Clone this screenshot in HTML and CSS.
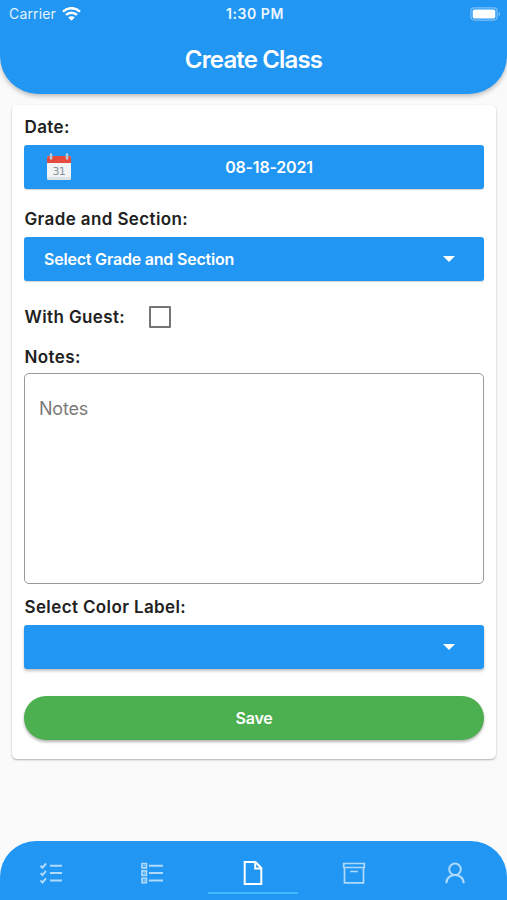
FILE: index.html
```html
<!DOCTYPE html>
<html lang="en">
<head>
<meta charset="utf-8">
<title>Create Class</title>
<link rel="stylesheet" href="styles.css">
</head>
<body>
<div class="screen">
  <header class="header">
    <div class="status">
      <div class="carrier"><span>Carrier</span>
        <svg width="19" height="14" viewBox="0 0 19 14" fill="none" stroke="#fff" stroke-width="2.5"><path d="M1 4.7C5.8 0 13.2 0 18 4.7M4 7.9c3.2-3 7.8-3 11 0"/><path d="M6.2 10.4c1.8-1.7 4.8-1.7 6.6 0L9.5 13.7z" fill="#fff" stroke="none"/></svg>
      </div>
      <time class="clock">1:30 PM</time>
      <svg class="battery" width="31" height="14" viewBox="0 0 31 14"><rect x=".9" y=".9" width="26.2" height="12.2" rx="3.5" fill="none" stroke="#7cc1fa" stroke-width="1.2"/><rect x="2.7" y="2.5" width="22.6" height="9" rx="1.8" fill="#fff"/><path d="M28.7 5c2 .7 2 3.3 0 4z" fill="#7cc1fa"/></svg>
    </div>
    <h1 class="title">Create Class</h1>
  </header>
  <main class="card">
    <div class="label label-date">Date:</div>
    <button class="bar date">
      <svg class="calendar" width="26" height="28" viewBox="0 0 26 28"><rect x="1" y="3" width="24" height="24" rx="2" fill="#f1f3f4"/><path d="M1 10V5q0-2 2-2h20q2 0 2 2v5z" fill="#e64a3c"/><path d="M1 25q0 2 2 2h20q2 0 2-2v-1H1z" fill="#dde2e5"/><path d="M5 1.5v4M21 1.5v4" stroke="#b9c9d2" stroke-width="2.6" stroke-linecap="round"/><text x="12.7" y="21.8" text-anchor="middle" class="day">31</text></svg>
      <span class="date-value">08-18-2021</span>
    </button>
    <div class="label label-grade">Grade and Section:</div>
    <button class="bar select"><span class="select-value">Select Grade and Section</span><svg width="12" height="6" viewBox="0 0 12 6"><path d="M0 0h12L6 6z" fill="#fff"/></svg></button>
    <div class="guest"><span class="label label-guest">With Guest:</span><span class="checkbox" role="checkbox" aria-checked="false"></span></div>
    <div class="label label-notes">Notes:</div>
    <textarea class="notes" placeholder="Notes"></textarea>
    <div class="label label-color">Select Color Label:</div>
    <button class="bar select raised"><span></span><svg width="12" height="6" viewBox="0 0 12 6"><path d="M0 0h12L6 6z" fill="#fff"/></svg></button>
    <button class="save">Save</button>
  </main>
  <nav class="nav">
    <a class="tab"><svg width="24" height="24" viewBox="0 0 24 24"><path d="M11 4.7h12M11 12.1h12M11 19.5h12M1.5 4.7l2 2L7 2.5M1.5 12.1l2 2L7 9.9M1.5 19.5l2 2L7 17.3"/></svg></a>
    <a class="tab"><svg width="24" height="24" viewBox="0 0 24 24"><path d="M9 4.7h14M9 12.1h14M9 19.5h14"/><path class="fine" d="M2 2.5h4.4v4.4H2zM2 9.9h4.4v4.4H2zM2 17.3h4.4v4.4H2zM3.6 4.7h1.2M3.6 12.1h1.2M3.6 19.5h1.2"/></svg></a>
    <a class="tab active"><svg width="24" height="26" viewBox="0 0 24 26"><path d="M3.7 2h10.8L20.3 8v16H3.7zM14.2 2v6.4h6"/></svg></a>
    <a class="tab"><svg width="24" height="24" viewBox="0 0 24 24"><path class="fine" d="M1.7 2.5h20.6v4H1.7zM2.5 6.5v15.3h19V6.5M8.2 10.5h7.6"/></svg></a>
    <a class="tab"><svg width="24" height="24" viewBox="0 0 24 24"><circle cx="12" cy="8.3" r="5.8"/><path d="M3.3 22.3c0-11 17.4-11 17.4 0"/></svg></a>
  </nav>
</div>
</body>
</html>
```
FILE: styles.css
```css
* { box-sizing: border-box; }
body { margin: 0; background: #fafafa; font-family: Inter, "Noto Sans", sans-serif; color: #212121; }
button { border: 0; padding: 0; color: #fff; font-family: inherit; }
svg { display: block; flex: none; }
.screen { height: 900px; display: flex; flex-direction: column; overflow: hidden; }
.header { height: 94px; flex: none; background: #2196f3; border-radius: 0 0 38px 38px; color: #fff; box-shadow: 0 2px 5px rgba(0,0,0,.27); }
.status { height: 27px; padding: 0 6px 0 9px; display: grid; grid-template-columns: 1fr auto 1fr; align-items: center; font-size: 14px; }
.carrier { display: flex; align-items: center; gap: 6px; letter-spacing: .15px; color: #e3f2fd; }
.clock { font-weight: 600; font-size: 14px; letter-spacing: .55px; color: #eef7fe; }
.battery { justify-self: end; }
.title { margin: 17px 0 0; text-align: center; font-size: 24px; line-height: 32px; font-weight: 600; letter-spacing: -.85px; }
.card { width: 484px; height: 654px; margin: 11px 0 0 12px; padding: 9px 12px 0; background: #fff; border-radius: 5px; box-shadow: 0 1px 2px rgba(0,0,0,.3); display: flex; flex-direction: column; }
.label { font-size: 17px; line-height: 26px; font-weight: 600; letter-spacing: .38px; white-space: nowrap; padding-left: .5px; }
.bar { width: 460px; height: 44px; flex: none; background: #2196f3; border-radius: 3px; box-shadow: 0 1px 1px rgba(0,0,0,.18); display: flex; align-items: center; font-size: 16px; font-weight: 600; letter-spacing: -.2px; }
.raised { box-shadow: 0 2px 3px rgba(0,0,0,.25); }
.date { margin-top: 5px; display: grid; grid-template-columns: 22px 26px 1fr 18px; }
.date .calendar { grid-column: 2; }
.date-value { text-align: center; }
.day { font-family: "DejaVu Sans", sans-serif; font-size: 11px; font-weight: 400; fill: #85929a; letter-spacing: -.7px; }
.label-grade { margin-top: 17px; }
.label-grade + .bar { margin-top: 5px; }
.select { justify-content: space-between; padding: 0 29px 0 20px; }
.select-value { position: relative; top: -.5px; }
.guest { display: flex; align-items: center; height: 22px; margin-top: 25px; }
.label-guest { width: 125px; }
.checkbox { width: 22px; height: 22px; border: 2px solid #757575; border-radius: 1px; }
.label-notes { margin-top: 16px; }
.notes { width: 460px; height: 211px; flex: none; margin: 3px 0 0; padding: 23px 14px; border: 1px solid #999; border-radius: 5px; background: #fff; resize: none; font: 400 18px/24px Inter, sans-serif; letter-spacing: -.2px; outline: 0; }
.notes::placeholder { color: #7a7a7a; opacity: 1; }
.label-color { margin-top: 10px; }
.label-color + .bar { margin-top: 5px; }
.save { width: 460px; height: 44px; margin-top: 27px; flex: none; border-radius: 22px; background: #4caf50; box-shadow: 0 2px 3px rgba(0,0,0,.3); font-size: 16px; font-weight: 600; letter-spacing: -.2px; }
.nav { height: 59px; margin-top: auto; flex: none; background: #2196f3; border-radius: 36px 36px 0 0; display: grid; grid-template-columns: repeat(5, 1fr); padding: 0 2px 0 0; }
.tab { display: flex; justify-content: center; align-items: center; padding-top: 5px; border-bottom: 0 solid #40c4ff; }
.tab svg { fill: none; stroke: #b0dafb; stroke-width: 2; }
.tab .fine { stroke-width: 1.7; }
.tab.active { width: 90px; height: 53px; justify-self: center; padding-top: 12px; border-bottom: 2px solid #40b9ff; }
.tab.active svg { stroke: #fff; stroke-width: 2; }
```
